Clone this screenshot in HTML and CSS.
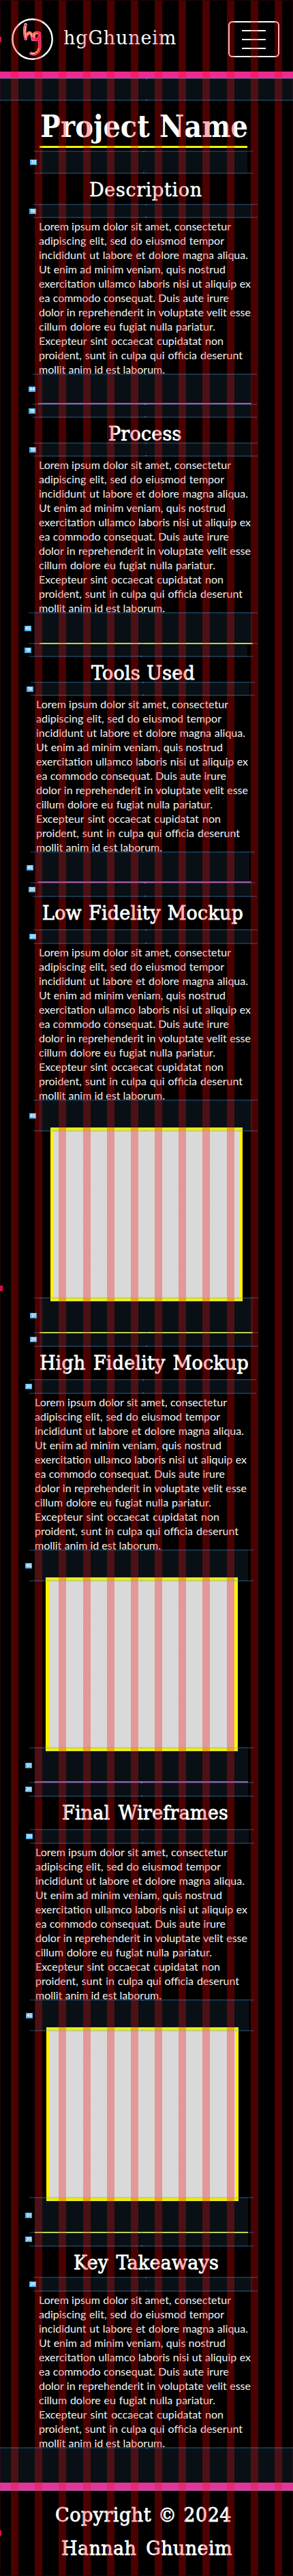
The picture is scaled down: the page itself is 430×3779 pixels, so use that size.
FILE: index.html
```html
<!DOCTYPE html>
<html lang="en">
<head>
<meta charset="utf-8">
<title>hgGhuneim – Project Name</title>
<link rel="stylesheet" href="styles.css">
</head>
<body>
<div class="page">
  <header class="header">
    <svg class="logo" viewBox="0 0 61 61" width="61" height="61" aria-label="hg">
      <circle cx="30.5" cy="30.5" r="29.2" fill="none" stroke="#fff" stroke-width="2.5"/>
      <g fill="none" stroke-linecap="round" stroke-linejoin="round">
        <g stroke="#ffc4dc" stroke-width="4.4">
          <path d="M20.7 9C18.5 16 18.7 23 21 30"/>
          <path d="M22.5 25C25 19 29.500 19 31 31"/>
          <path d="M41 22C35 19 31.500 23 32.500 28C34 33 40 32 41 26L41.300 39C41.500 49 36 54 28.500 51.500"/>
        </g>
        <g stroke="#ee2a7b" stroke-width="3.400">
          <path d="M20.7 10C18.7 16 18.9 23 21 30"/>
          <path d="M22.5 25C25 19 29.500 19 31 31"/>
          <path d="M41 22C35 19 31.500 23 32.500 28C34 33 40 32 41 26L41.300 39C41.500 49 36 54 28.500 51.500"/>
        </g>
        <g stroke="#fff200" stroke-width="1.500">
          <path d="M20.500 12C19.300 17 19.500 23 21 28"/>
          <path d="M22.5 24C25 20 28.500 20 30 26"/>
          <path d="M38 22C34 20.500 31.700 24 33 28"/>
          <path d="M40 44C38 50 34 52.500 29 51"/>
        </g>
      </g>
    </svg>
    <span class="brand">hgGhuneim</span>
    <button class="menu" aria-label="Menu"><i></i><i></i><i></i></button>
  </header>

  <main class="main">
    <div class="gap gap-full h34"></div>
    <h1 class="title">Project Name</h1>

    <div class="gap h34 x58 narrow"><b>32</b></div>
    <h2 class="head t44 description">Description</h2>
    <div class="gap h21 x57"><b>19</b></div>
    <p class="copy x57"><span class="l1">Lorem ipsum dolor sit amet, consectetur</span><span class="l2">adipiscing elit, sed do eiusmod tempor</span><span class="l3">incididunt ut labore et dolore magna aliqua.</span><span class="l4">Ut enim ad minim veniam, quis nostrud</span><span class="l5">exercitation ullamco laboris nisi ut aliquip ex</span><span class="l6">ea commodo consequat. Duis aute irure</span><span class="l7">dolor in reprehenderit in voluptate velit esse</span><span class="l8">cillum dolore eu fugiat nulla pariatur.</span><span class="l9">Excepteur sint occaecat cupidatat non</span><span class="l10">proident, sunt in culpa qui officia deserunt</span><span class="l11">mollit anim id est laborum.</span></p>

    <div class="gap h46 x56"><b>44</b></div>
    <div class="rule pink x56"></div>
    <div class="gap join h21 x56"><b>19</b></div>
    <h2 class="head t36 process">Process</h2>
    <div class="gap h21 x57"><b>19</b></div>
    <p class="copy x57"><span class="l1">Lorem ipsum dolor sit amet, consectetur</span><span class="l2">adipiscing elit, sed do eiusmod tempor</span><span class="l3">incididunt ut labore et dolore magna aliqua.</span><span class="l4">Ut enim ad minim veniam, quis nostrud</span><span class="l5">exercitation ullamco laboris nisi ut aliquip ex</span><span class="l6">ea commodo consequat. Duis aute irure</span><span class="l7">dolor in reprehenderit in voluptate velit esse</span><span class="l8">cillum dolore eu fugiat nulla pariatur.</span><span class="l9">Excepteur sint occaecat cupidatat non</span><span class="l10">proident, sunt in culpa qui officia deserunt</span><span class="l11">mollit anim id est laborum.</span></p>

    <div class="gap h47 x50 wide"><b>45</b></div>
    <div class="rule yellow x58"></div>
    <div class="gap join h21 x50"><b>19</b></div>
    <h2 class="head t36 tools">Tools Used</h2>
    <div class="gap h21 x53"><b>19</b></div>
    <p class="copy x53"><span class="l1">Lorem ipsum dolor sit amet, consectetur</span><span class="l2">adipiscing elit, sed do eiusmod tempor</span><span class="l3">incididunt ut labore et dolore magna aliqua.</span><span class="l4">Ut enim ad minim veniam, quis nostrud</span><span class="l5">exercitation ullamco laboris nisi ut aliquip ex</span><span class="l6">ea commodo consequat. Duis aute irure</span><span class="l7">dolor in reprehenderit in voluptate velit esse</span><span class="l8">cillum dolore eu fugiat nulla pariatur.</span><span class="l9">Excepteur sint occaecat cupidatat non</span><span class="l10">proident, sunt in culpa qui officia deserunt</span><span class="l11">mollit anim id est laborum.</span></p>

    <div class="gap h47 x53"><b>45</b></div>
    <div class="rule pink x56"></div>
    <div class="gap join h22 x56"><b>20</b></div>
    <h2 class="head t47 lowfi">Low Fidelity Mockup</h2>
    <div class="gap h22 x57"><b>20</b></div>
    <p class="copy x57"><span class="l1">Lorem ipsum dolor sit amet, consectetur</span><span class="l2">adipiscing elit, sed do eiusmod tempor</span><span class="l3">incididunt ut labore et dolore magna aliqua.</span><span class="l4">Ut enim ad minim veniam, quis nostrud</span><span class="l5">exercitation ullamco laboris nisi ut aliquip ex</span><span class="l6">ea commodo consequat. Duis aute irure</span><span class="l7">dolor in reprehenderit in voluptate velit esse</span><span class="l8">cillum dolore eu fugiat nulla pariatur.</span><span class="l9">Excepteur sint occaecat cupidatat non</span><span class="l10">proident, sunt in culpa qui officia deserunt</span><span class="l11">mollit anim id est laborum.</span></p>
    <div class="gap h47 x57"><b>45</b></div>
    <div class="frame frame-a"></div>

    <div class="gap under h53 x58"><b>51</b></div>
    <div class="rule yellow x58"></div>
    <div class="gap join h22 x58"><b>20</b></div>
    <h2 class="head t47 highfi">High Fidelity Mockup</h2>
    <div class="gap h22 x51 wide2"><b>20</b></div>
    <p class="copy x51"><span class="l1">Lorem ipsum dolor sit amet, consectetur</span><span class="l2">adipiscing elit, sed do eiusmod tempor</span><span class="l3">incididunt ut labore et dolore magna aliqua.</span><span class="l4">Ut enim ad minim veniam, quis nostrud</span><span class="l5">exercitation ullamco laboris nisi ut aliquip ex</span><span class="l6">ea commodo consequat. Duis aute irure</span><span class="l7">dolor in reprehenderit in voluptate velit esse</span><span class="l8">cillum dolore eu fugiat nulla pariatur.</span><span class="l9">Excepteur sint occaecat cupidatat non</span><span class="l10">proident, sunt in culpa qui officia deserunt</span><span class="l11">mollit anim id est laborum.</span></p>
    <div class="gap h47 x51"><b>45</b></div>
    <div class="frame frame-b"></div>

    <div class="gap under h53 x51"><b>51</b></div>
    <div class="rule pink x51"></div>
    <div class="gap join h22 x51"><b>20</b></div>
    <h2 class="head t47 final">Final Wireframes</h2>
    <div class="gap h22 x52"><b>20</b></div>
    <p class="copy x52"><span class="l1">Lorem ipsum dolor sit amet, consectetur</span><span class="l2">adipiscing elit, sed do eiusmod tempor</span><span class="l3">incididunt ut labore et dolore magna aliqua.</span><span class="l4">Ut enim ad minim veniam, quis nostrud</span><span class="l5">exercitation ullamco laboris nisi ut aliquip ex</span><span class="l6">ea commodo consequat. Duis aute irure</span><span class="l7">dolor in reprehenderit in voluptate velit esse</span><span class="l8">cillum dolore eu fugiat nulla pariatur.</span><span class="l9">Excepteur sint occaecat cupidatat non</span><span class="l10">proident, sunt in culpa qui officia deserunt</span><span class="l11">mollit anim id est laborum.</span></p>
    <div class="gap h47 x52"><b>45</b></div>
    <div class="frame frame-c"></div>

    <div class="gap under h53 x51"><b>51</b></div>
    <div class="rule yellow x51"></div>
    <div class="gap join h22 x51"><b>20</b></div>
    <h2 class="head t44 key">Key Takeaways</h2>
    <div class="gap h22 x57"><b>20</b></div>
    <p class="copy x57"><span class="l1">Lorem ipsum dolor sit amet, consectetur</span><span class="l2">adipiscing elit, sed do eiusmod tempor</span><span class="l3">incididunt ut labore et dolore magna aliqua.</span><span class="l4">Ut enim ad minim veniam, quis nostrud</span><span class="l5">exercitation ullamco laboris nisi ut aliquip ex</span><span class="l6">ea commodo consequat. Duis aute irure</span><span class="l7">dolor in reprehenderit in voluptate velit esse</span><span class="l8">cillum dolore eu fugiat nulla pariatur.</span><span class="l9">Excepteur sint occaecat cupidatat non</span><span class="l10">proident, sunt in culpa qui officia deserunt</span><span class="l11">mollit anim id est laborum.</span></p>
    <div class="gap gap-full h64"></div>
  </main>

  <footer class="footer">
    <div class="credit credit-a">Copyright © 2024</div>
    <div class="credit credit-b">Hannah Ghuneim</div>
  </footer>

  <div class="grid"></div>
  <i class="tag tag-top"></i>
  <i class="tag tag-mid"></i>
  <i class="tag tag-end"></i>
</div>
</body>
</html>
```

FILE: styles.css
```css
* { box-sizing: border-box; }
body { margin: 0; background: #000; color: #fff; }
.page { position: relative; width: 430px; height: 3779px; overflow: hidden; }

/* Header */
.header {
  display: flex;
  align-items: center;
  height: 115px;
  padding: 0 20px 0 17px;
  border-bottom: 10px solid #ee2a91;
}
.logo { display: block; flex: none; margin-top: 10px; }
.brand {
  margin: 7px 0 0 15px;
  font: 27px/34px "DejaVu Serif", serif;
  letter-spacing: .85px;
}
.menu {
  display: flex;
  flex-direction: column;
  align-items: center;
  justify-content: center;
  gap: 11px;
  width: 75px;
  height: 53px;
  margin: 10px 0 0 auto;
  padding: 0;
  border: 2px solid #fff;
  border-radius: 6px;
  background: none;
}
.menu i { width: 35px; height: 2px; background: #fff; }

/* Content column */
.main { display: flex; flex-direction: column; align-items: flex-start; margin-top: -1px; }
.title {
  width: 305px;
  height: 69px;
  margin: 0 0 4px 58px;
  padding-left: 1px;
  border-bottom: 3px solid #fff200;
  font: bold 44.5px/75px "DejaVu Serif Condensed", "DejaVu Serif", serif;
  white-space: nowrap;
}
.head, .credit {
  margin: 0;
  font: 27px/47px "DejaVu Serif", serif;
  letter-spacing: .2px;
  white-space: nowrap;
  text-align-last: justify;
  -webkit-text-stroke: .8px #fff;
}
.t36 { height: 36px; }
.t44 { height: 44px; }
.t47 { height: 47px; }
.description { margin-left: 131px; letter-spacing: .65px; -webkit-text-stroke-width: .5px; }
.process { margin-left: 159px; }
.tools { margin-left: 134px; width: 152px; }
.lowfi { margin-left: 62px; width: 295px; }
.highfi { margin-left: 58px; width: 307px; }
.final { margin-left: 91px; width: 244px; }
.key { margin-left: 108px; width: 213px; }

.copy {
  height: 228px;
  margin: 0;
  padding-top: 1px;
  font: 16px/21px Lato, "Open Sans", sans-serif;
  color: #f4f4f4;
}
.copy span { display: block; white-space: nowrap; text-align-last: justify; }
.l1 { width: 282px; }
.l2 { width: 272px; }
.l3 { width: 307px; }
.l4 { width: 274px; }
.l5 { width: 311px; }
.l6 { width: 279px; }
.l7 { width: 311px; }
.l8 { width: 259px; }
.l9 { width: 271px; }
.l10 { width: 299px; }
.l11 { width: 185px; }

.x50 { margin-left: 50px; }
.x51 { margin-left: 51px; }
.x52 { margin-left: 52px; }
.x53 { margin-left: 53px; }
.x56 { margin-left: 56px; }
.x57 { margin-left: 57px; }
.x58 { margin-left: 58px; }

.rule { width: 313px; height: 2px; }
.pink { margin-top: -3px; background: #ee2a91; }
.yellow { margin-top: -2px; background: #fff200; }
.pink + .gap { margin-top: -1px; }
.yellow + .gap { margin-top: -2px; }

.frame {
  width: 282px;
  height: 255px;
  margin-top: -6px;
  border: 5px solid #fff200;
  background: #d9d9d9;
}
.frame-a { margin-left: 74px; }
.frame-b { margin-left: 67px; }
.frame-c { margin-left: 68px; }
.under { margin-top: -6px; }

/* Spacing bands, drawn over the column grid */
.gap {
  position: relative;
  z-index: 3;
  width: 313px;
  background: rgba(80, 165, 225, .095);
}
.narrow { width: 305px; }
.wide { width: 320px; }
.wide2 { width: 317px; }
.gap-full { width: 430px; }
.gap::before {
  content: "";
  position: absolute;
  inset: 0 -8px;
  border: solid rgba(80, 165, 225, .24);
  border-width: 2px 0;
}
.join::before { border-top-color: transparent; }
.gap::after {
  content: "";
  position: absolute;
  top: 1px;
  bottom: 1px;
  left: calc(50% - 1px);
  width: 2px;
  border: solid rgba(77, 175, 235, .75);
  border-width: 1.500px 0;
}
.gap b {
  position: absolute;
  top: calc(50% - 4px);
  left: -14px;
  width: 10px;
  height: 8px;
  background: #4dafea;
  color: #fff;
  font: bold 6px/8px Inter, sans-serif;
  text-align: center;
}
.h21 { height: 21px; }
.h22 { height: 22px; }
.h34 { height: 34px; }
.h46 { height: 46px; }
.h47 { height: 47px; }
.h53 { height: 53px; }
.h64 { height: 64px; }

/* Footer */
.footer { margin-top: -12px; height: 137px; border-top: 12px solid #ee2a91; padding-top: 11px; }
.credit { line-height: 49px; }
.credit-a { margin-left: 81px; width: 259px; letter-spacing: .5px; }
.credit-b { margin-left: 90px; width: 251px; letter-spacing: .4px; }

/* Column grid over the whole page */
.grid {
  position: absolute;
  inset: 0;
  z-index: 2;
  pointer-events: none;
  border: 1px solid rgba(255, 0, 80, .14);
  background: repeating-linear-gradient(90deg, rgba(255, 0, 0, .3) 0 11px, transparent 11px 35.18px) 15px 0 / 420px 100% no-repeat;
}
.tag { position: absolute; left: 0; z-index: 4; width: 2px; height: 8px; background: #d4104a; }
.tag-top { top: 54px; }
.tag-mid { top: 1886px; width: 4px; }
.tag-end { top: 3712px; }
```
